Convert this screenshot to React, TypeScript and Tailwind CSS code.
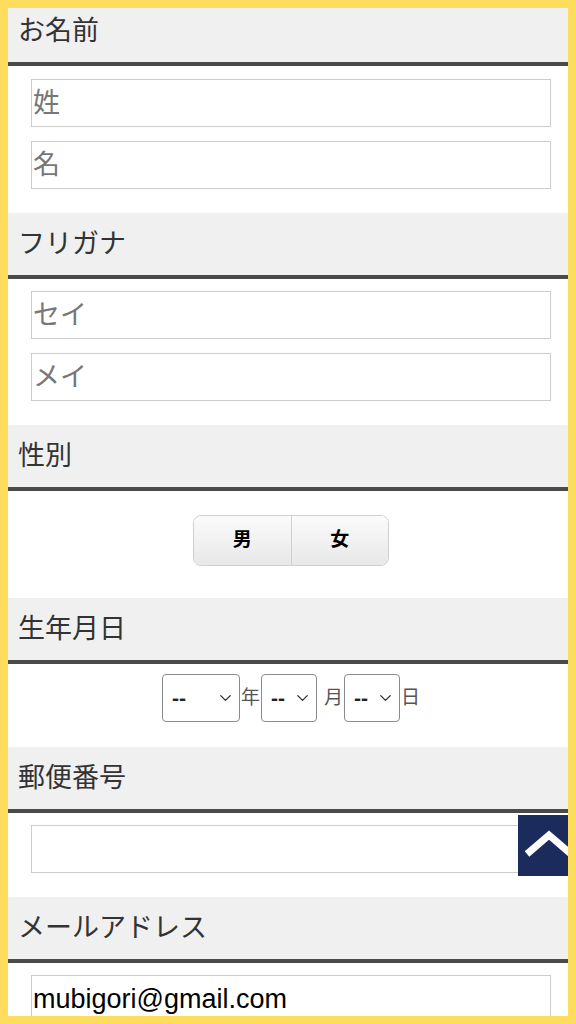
import { ChevronDown } from "lucide-react";

const font = "font-['Liberation_Sans','Noto_Sans_CJK_JP',sans-serif]";

function SectionHeader({ title }: { title: string }) {
  return (
    <div className="h-[66px] bg-[#f0f0f0] border-b-4 border-[#4a4a4a] pl-[18px] flex items-center text-[27px] text-[#333]">
      {title}
    </div>
  );
}

function TextInput({ placeholder, value }: { placeholder?: string; value?: string }) {
  return (
    <input
      type="text"
      placeholder={placeholder}
      defaultValue={value}
      className="block w-full h-[48px] border border-[#cccccc] bg-white pl-[1px] text-[27px] text-black placeholder:text-[#777] outline-none"
    />
  );
}

function DateSelect({ width }: { width: string }) {
  return (
    <div className={`relative h-[48px] ${width}`}>
      <select className="appearance-none w-full h-full border border-[#8c8c8c] rounded-[4px] bg-white pl-[9px] text-[21px] font-semibold text-[#222] outline-none">
        <option>--</option>
      </select>
      <ChevronDown
        className="absolute right-[5px] top-1/2 -translate-y-1/2 w-[19px] h-[19px] text-[#333] pointer-events-none"
        strokeWidth={1.7}
      />
    </div>
  );
}

export default function App() {
  return (
    <div className={`${font} bg-white min-h-screen`}>
      <section>
        <SectionHeader title="お名前" />
        <div className="pl-[31px] pr-[25px] pt-[13px] pb-[24px] flex flex-col gap-[14px]">
          <TextInput placeholder="姓" />
          <TextInput placeholder="名" />
        </div>
      </section>

      <section>
        <SectionHeader title="フリガナ" />
        <div className="pl-[31px] pr-[25px] pt-[12px] pb-[24px] flex flex-col gap-[14px]">
          <TextInput placeholder="セイ" />
          <TextInput placeholder="メイ" />
        </div>
      </section>

      <section>
        <SectionHeader title="性別" />
        <div className="pl-[31px] pr-[25px] pt-[24px] pb-[32px] flex justify-center">
          <div className="flex w-[196px] h-[51px] rounded-[8px] border border-[#cfcfcf] overflow-hidden">
            <button className="flex-1 bg-gradient-to-b from-[#fbfbfb] to-[#e8e8e8] text-[19px] font-bold text-black">
              男
            </button>
            <button className="flex-1 border-l border-[#cfcfcf] bg-gradient-to-b from-[#fbfbfb] to-[#e8e8e8] text-[19px] font-bold text-black">
              女
            </button>
          </div>
        </div>
      </section>

      <section>
        <SectionHeader title="生年月日" />
        <div className="pl-[31px] pr-[25px] pt-[10px] pb-[25px] flex justify-center items-center text-[19px] text-[#555]">
          <DateSelect width="w-[78px]" />
          <span className="mx-[1px]">年</span>
          <DateSelect width="w-[56px]" />
          <span className="ml-[7px] mr-[1px]">月</span>
          <DateSelect width="w-[56px]" />
          <span className="ml-[1px]">日</span>
        </div>
      </section>

      <section>
        <SectionHeader title="郵便番号" />
        <div className="pl-[31px] pr-[25px] pt-[12px] pb-[24px]">
          <TextInput />
        </div>
      </section>

      <section>
        <SectionHeader title="メールアドレス" />
        <div className="pl-[31px] pr-[25px] pt-[12px] pb-[24px]">
          <TextInput value="mubigori@gmail.com" />
        </div>
      </section>

      <button
        type="button"
        aria-label="ページトップへ"
        className="fixed right-[-4px] bottom-[148px] w-[62px] h-[61px] bg-[#1b2b5c] z-40"
      >
        <svg viewBox="0 0 62 61" className="w-full h-full">
          <polyline
            points="9,39 31,20 53,39"
            fill="none"
            stroke="white"
            strokeWidth="7"
          />
        </svg>
      </button>

      <div className="fixed inset-0 border-8 border-[#fedc5c] pointer-events-none z-50" />
    </div>
  );
}
